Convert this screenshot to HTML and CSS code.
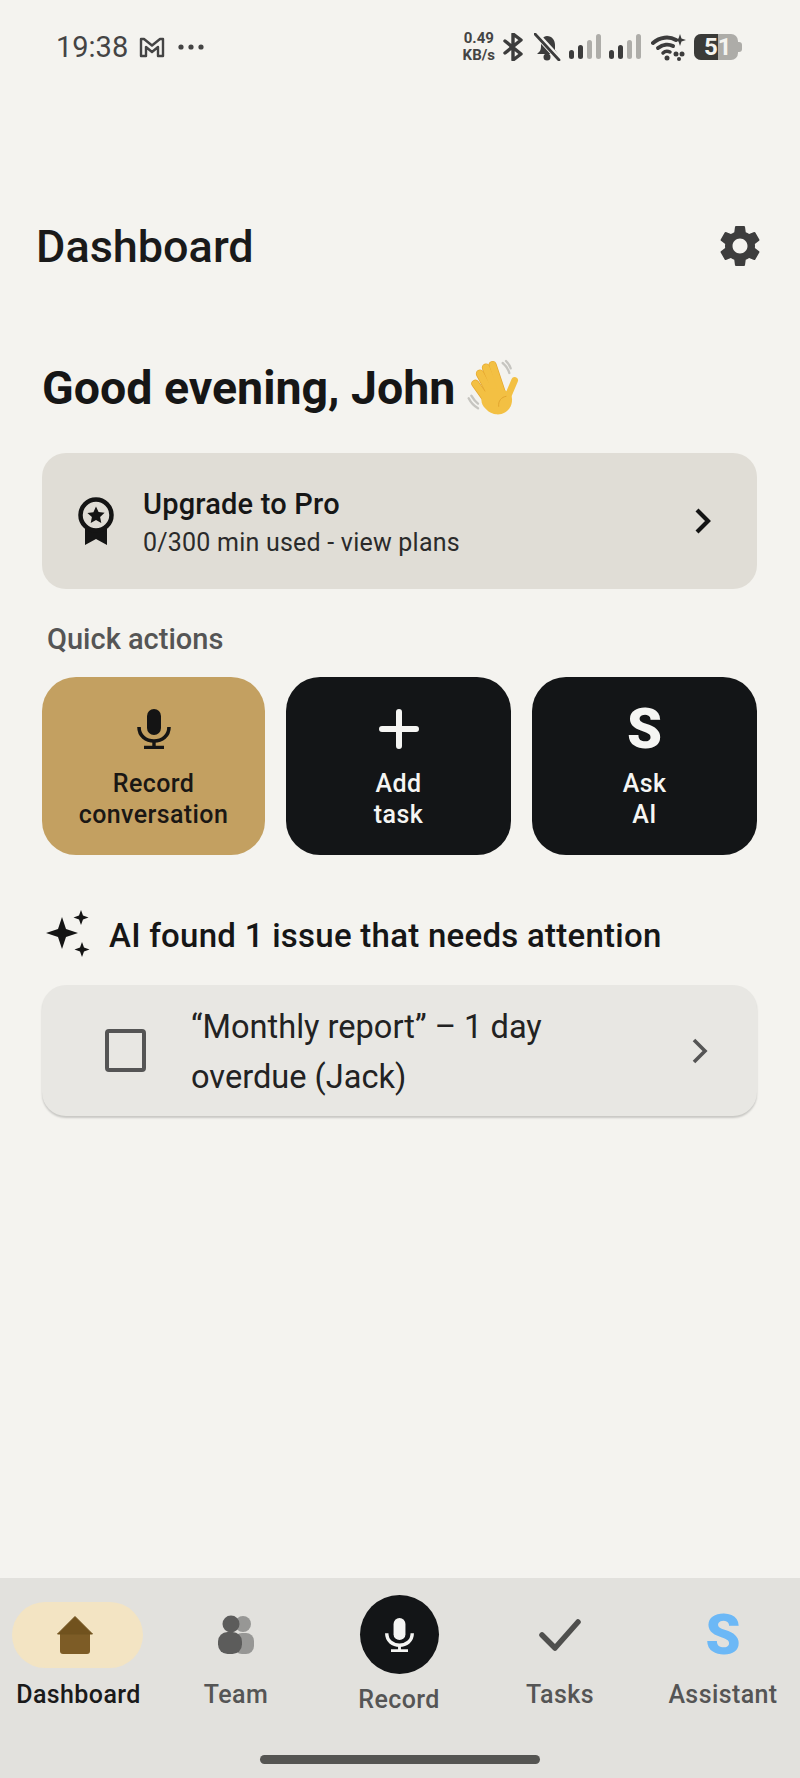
FILE: index.html
```html
<!DOCTYPE html>
<html lang="en">
<head>
    <meta charset="UTF-8">
    <meta name="viewport" content="width=device-width, initial-scale=1.0">
    <title>Dashboard</title>
    <link rel="stylesheet" href="styles.css">
</head>
<body>
    <div class="status-bar">
        <span class="time">19:38</span>
        <svg class="mail-icon" width="26" height="21" viewBox="0 0 26 21"><path d="M2 2h3l8 6.500L21 2h3v17h-5v-9l-6 5-6-5v9H2z" fill="none" stroke="#444" stroke-width="2.400" stroke-linejoin="round"/></svg>
        <svg class="more-icon" width="26" height="6" viewBox="0 0 26 6"><circle cx="3" cy="3" r="2.600" fill="#444"/><circle cx="13" cy="3" r="2.600" fill="#444"/><circle cx="23" cy="3" r="2.600" fill="#444"/></svg>
        <div class="status-right">
            <div class="speed"><span>0.49</span><span>KB/s</span></div>
            <svg width="21" height="28" viewBox="0 0 21 28"><path d="M2 8l16 13-8 6V1l8 6L2 20" fill="none" stroke="#3c3c3c" stroke-width="3.400" stroke-linejoin="round" stroke-linecap="round"/></svg>
            <svg class="bell" width="27" height="28" viewBox="0 0 27 28"><path d="M13 3c5 0 8 4 8 9v5l3 4H3l3-3c1-2 1-4 1-6 0-5 2-9 6-9z" fill="#3c3c3c"/><circle cx="13" cy="24" r="3.500" fill="#3c3c3c"/><path d="M2 1l23 25" stroke="#f4f3ef" stroke-width="6"/><path d="M1 1l24 26" stroke="#3c3c3c" stroke-width="2.800" stroke-linecap="round"/></svg>
            <svg class="signal" width="32" height="26" viewBox="0 0 32 26"><rect x="0" y="16" width="5" height="9" rx="2.500" fill="#3c3c3c"/><rect x="9" y="11" width="5" height="14" rx="2.500" fill="#3c3c3c"/><rect x="18" y="6" width="5" height="19" rx="2.500" fill="#aeada9"/><rect x="27" y="0" width="5" height="25" rx="2.500" fill="#aeada9"/></svg>
            <svg class="signal" width="32" height="26" viewBox="0 0 32 26"><rect x="0" y="16" width="5" height="9" rx="2.500" fill="#3c3c3c"/><rect x="9" y="11" width="5" height="14" rx="2.500" fill="#3c3c3c"/><rect x="18" y="6" width="5" height="19" rx="2.500" fill="#aeada9"/><rect x="27" y="0" width="5" height="25" rx="2.500" fill="#aeada9"/></svg>
            <svg class="wifi" width="35" height="27" viewBox="0 0 35 27">
                <path d="M2 9c7-6 16-7 23-3" fill="none" stroke="#3c3c3c" stroke-width="4" stroke-linecap="round"/>
                <path d="M7 14c5-4 11-4 15-2" fill="none" stroke="#3c3c3c" stroke-width="4" stroke-linecap="round"/>
                <path d="M12 19c2-2 5-2 7-1" fill="none" stroke="#3c3c3c" stroke-width="3.500" stroke-linecap="round"/>
                <circle cx="16" cy="24" r="2.500" fill="#3c3c3c"/>
                <path d="M29 0l1.500 4.500L35 6l-4.500 1.500L29 12l-1.500-4.500L23 6l4.500-1.500z" fill="#3c3c3c"/>
                <circle cx="25" cy="20" r="2.500" fill="#3c3c3c"/><circle cx="31" cy="20" r="2.500" fill="#3c3c3c"/><circle cx="28" cy="25" r="2" fill="#3c3c3c"/>
            </svg>
            <div class="battery"><div class="battery-fill"></div><span>51</span></div>
        </div>
    </div>

    <main class="content">
        <header class="page-header">
            <h1>Dashboard</h1>
            <svg class="gear" width="50" height="50" viewBox="0 0 24 24"><path fill="#3d3d3d" d="M19.140 12.940c.04-.3.06-.61.06-.94 0-.32-.02-.64-.07-.94l2.030-1.580c.18-.14.23-.41.12-.61l-1.920-3.320c-.12-.22-.37-.29-.59-.22l-2.390.96c-.5-.38-1.030-.7-1.620-.94l-.36-2.540c-.04-.24-.24-.41-.48-.41h-3.840c-.24 0-.43.17-.47.41l-.36 2.540c-.59.24-1.130.57-1.620.94l-2.390-.96c-.22-.08-.47 0-.59.22L2.740 8.870c-.12.21-.08.47.12.61l2.030 1.580c-.05.3-.09.63-.09.94s.02.64.07.94l-2.030 1.580c-.18.14-.23.41-.12.61l1.920 3.320c.12.22.37.29.59.22l2.390-.96c.5.38 1.030.7 1.620.94l.36 2.540c.05.24.24.41.48.41h3.840c.24 0 .44-.17.47-.41l.36-2.540c.59-.24 1.130-.56 1.620-.94l2.390.96c.22.08.47 0 .59-.22l1.920-3.320c.12-.22.07-.47-.12-.61l-2.010-1.580zM12 15.600c-1.980 0-3.600-1.620-3.600-3.600s1.620-3.600 3.600-3.600 3.600 1.620 3.600 3.600-1.620 3.600-3.600 3.600z"/></svg>
        </header>

        <div class="greeting">
            <h2>Good evening, John</h2>
            <svg class="wave" width="80" height="70" viewBox="0 0 240 210">
                <path d="M140 36c10 8 16 16 20 30M150 30c6 6 12 14 14 22M38 142c6 12 14 22 28 30M46 134c6 10 12 18 20 24" fill="none" stroke="#c6c5c0" stroke-width="7" stroke-linecap="round"/>
                <g fill="none" stroke-linecap="round">
                    <path d="M58 98l44 62" stroke="#e3a52e" stroke-width="24"/>
                    <path d="M72 68l44 82" stroke="#e3a52e" stroke-width="25"/>
                    <path d="M90 50l36 86" stroke="#e3a52e" stroke-width="25"/>
                    <path d="M110 42l28 84" stroke="#e3a52e" stroke-width="24"/>
                    <path d="M58 98l44 62" stroke="#f3c043" stroke-width="20"/>
                    <path d="M72 68l44 82" stroke="#f3c043" stroke-width="21"/>
                    <path d="M90 50l36 86" stroke="#f3c043" stroke-width="21"/>
                    <path d="M110 42l28 84" stroke="#f3c043" stroke-width="20"/>
                    <path d="M176 88l-22 52" stroke="#f3c043" stroke-width="20"/>
                </g>
                <path d="M82 128c12-18 46-24 78-2 10 8 10 26 4 40-8 16-24 26-44 24-16-2-30-12-40-28-6-10-4-24 2-34z" fill="#f3c043"/>
                <path d="M150 136c-14 2-24 14-22 30" fill="none" stroke="#e3a52e" stroke-width="3" stroke-linecap="round"/>
            </svg>
        </div>

        <div class="upgrade-card">
            <svg class="badge" width="36" height="48" viewBox="0 0 36 48">
                <path d="M7 30v18l11-6 11 6V30z" fill="#141414"/>
                <circle cx="18" cy="18" r="15.500" fill="#e0ddd6" stroke="#141414" stroke-width="4.500"/>
                <path d="M18 9.500l2.600 5.600 6 .7-4.500 4.100 1.200 6L18 22.900 12.700 26l1.200-6-4.500-4.100 6-.7z" fill="#141414"/>
            </svg>
            <div class="upgrade-text">
                <div class="upgrade-title">Upgrade to Pro</div>
                <div class="upgrade-sub">0/300 min used - view plans</div>
            </div>
            <svg width="18" height="26" viewBox="0 0 18 26"><path d="M3 2l11 11L3 24" fill="none" stroke="#141414" stroke-width="4.200"/></svg>
        </div>

        <div class="section-label">Quick actions</div>
        <div class="actions">
            <div class="action action-gold">
                <div class="action-icon">
                    <svg width="34" height="40" viewBox="0 0 34 40"><rect x="10" y="0" width="14" height="26" rx="7" fill="#141414"/><path d="M2 18c0 9 7 14 15 14s15-5 15-14" fill="none" stroke="#141414" stroke-width="3.600"/><path d="M17 32v6M7 38.500h20" stroke="#141414" stroke-width="3.400"/></svg>
                </div>
                <div class="action-label">Record<br>conversation</div>
            </div>
            <div class="action">
                <div class="action-icon">
                    <svg width="40" height="40" viewBox="0 0 40 40"><path d="M20 3v34M3 20h34" stroke="#f5f5f3" stroke-width="6" stroke-linecap="round"/></svg>
                </div>
                <div class="action-label">Add<br>task</div>
            </div>
            <div class="action">
                <div class="action-icon"><span class="s-logo">S</span></div>
                <div class="action-label">Ask<br>AI</div>
            </div>
        </div>

        <div class="issue-heading">
            <svg width="46" height="48" viewBox="0 0 46 48">
                <path d="M17 7l4 12 12 4-12 4-4 12-4-12-12-4 12-4z" fill="#141414"/>
                <path d="M36 0l2 5.500L43.500 7.500 38 9.500 36 15l-2-5.500-5.500-2 5.500-2z" fill="#141414"/>
                <path d="M37 32l2 5.500 5.500 2-5.500 2L37 47l-2-5.500-5.500-2 5.500-2z" fill="#141414"/>
            </svg>
            <span class="issue-title">AI found 1 issue that needs attention</span>
        </div>

        <div class="issue-card">
            <div class="checkbox"></div>
            <div class="issue-text">“Monthly report” – 1 day overdue (Jack)</div>
            <svg width="18" height="26" viewBox="0 0 18 26"><path d="M3 2l11 11L3 24" fill="none" stroke="#555" stroke-width="3.600"/></svg>
        </div>
    </main>

    <nav class="bottom-nav">
        <div class="nav-items">
            <div class="nav-item">
                <div class="nav-icon nav-icon-active">
                    <svg class="home-icon" width="38" height="40" viewBox="0 0 38 40"><path d="M4 17h30v19c0 2-1 3-3 3H7c-2 0-3-1-3-3z" fill="#7d5c26"/><path d="M19 1.500L36.500 19h-35z" fill="#71521e" stroke="#71521e" stroke-linejoin="round"/></svg>
                </div>
                <span class="nav-label nav-label-active">Dashboard</span>
            </div>
            <div class="nav-item">
                <div class="nav-icon">
                    <svg width="36" height="40" viewBox="0 0 36 40"><circle cx="25" cy="9" r="8" fill="#979795"/><rect x="16" y="18" width="20" height="21" rx="8" fill="#979795"/><circle cx="13" cy="9" r="8.500" fill="#5c5c5b"/><rect x="0" y="17" width="24" height="22" rx="9.500" fill="#5c5c5b"/></svg>
                </div>
                <span class="nav-label">Team</span>
            </div>
            <div class="nav-item nav-item-record">
                <div class="record-btn">
                    <svg width="29" height="34" viewBox="0 0 34 40"><rect x="10" y="0" width="14" height="26" rx="7" fill="#f5f5f3"/><path d="M2 18c0 9 7 14 15 14s15-5 15-14" fill="none" stroke="#f5f5f3" stroke-width="4"/><path d="M17 32v6M7 38.500h20" stroke="#f5f5f3" stroke-width="3.400"/></svg>
                </div>
                <span class="nav-label">Record</span>
            </div>
            <div class="nav-item">
                <div class="nav-icon">
                    <svg width="42" height="34" viewBox="0 0 42 34"><path d="M3 17l13 13L39 4" fill="none" stroke="#4f4f4d" stroke-width="5.500" stroke-linecap="round" stroke-linejoin="round"/></svg>
                </div>
                <span class="nav-label">Tasks</span>
            </div>
            <div class="nav-item nav-item-last">
                <div class="nav-icon"><span class="s-logo s-logo-blue">S</span></div>
                <span class="nav-label">Assistant</span>
            </div>
        </div>
        <div class="home-bar"></div>
    </nav>
</body>
</html>
```

FILE: styles.css
```css
* {
    box-sizing: border-box;
}
body {
    margin: 0;
    height: 1778px;
    display: flex;
    flex-direction: column;
    overflow: hidden;
    font-family: Roboto, "Liberation Sans", sans-serif;
    background-color: #f4f3ef;
    color: #161616;
}
h1, h2 {
    margin: 0;
}

/* status bar */
.status-bar {
    display: flex;
    align-items: center;
    height: 94px;
    padding: 0 58px 0 56px;
    color: #444;
}
.time {
    font-size: 29px;
    line-height: 32px;
    margin-right: 11px;
}
.mail-icon {
    margin-right: 13px;
}
.status-right {
    display: flex;
    align-items: center;
    margin-left: auto;
}
.speed {
    display: flex;
    flex-direction: column;
    align-items: center;
    font-size: 15px;
    line-height: 17px;
    font-weight: 700;
    color: #444;
    margin-right: 8px;
}
.bell {
    margin-left: 10px;
}
.signal {
    margin-left: 8px;
}
.wifi {
    margin-left: 10px;
}
.battery {
    position: relative;
    width: 44px;
    height: 26px;
    margin: 0 4px 0 8px;
    border-radius: 7px;
    background: #adaca8;
}
.battery::after {
    content: "";
    position: absolute;
    right: -4px;
    top: 8px;
    width: 4px;
    height: 10px;
    border-radius: 0 3px 3px 0;
    background: #adaca8;
}
.battery-fill {
    width: 24px;
    height: 26px;
    border-radius: 7px 0 0 7px;
    background: #3a3a38;
}
.battery span {
    position: absolute;
    left: 10px;
    top: 0;
    font-size: 24px;
    line-height: 26px;
    font-weight: 700;
    color: #f4f3ef;
}

/* main content */
.content {
    flex: 1;
    padding: 0 43px 0 42px;
}
.page-header {
    display: flex;
    align-items: center;
    justify-content: space-between;
    height: 60px;
    margin: 122px -8px 0 -6px;
}
.page-header h1 {
    padding-top: 2px;
    font-size: 45px;
    line-height: 60px;
    font-weight: 500;
    color: #1a1a1a;
}
.greeting {
    display: flex;
    align-items: center;
    gap: 1px;
    margin-top: 82px;
    height: 60px;
}
.greeting h2 {
    font-size: 46.500px;
    line-height: 60px;
    font-weight: 700;
}
.wave {
    flex: none;
    margin-bottom: 4px;
}
.upgrade-card {
    display: flex;
    align-items: center;
    height: 136px;
    margin-top: 35px;
    padding: 0 45px 0 36px;
    border-radius: 24px;
    background: #e0ddd6;
}
.upgrade-text {
    flex: 1;
    margin-left: 29px;
    padding-top: 3px;
}
.upgrade-title {
    font-size: 29px;
    line-height: 36px;
    font-weight: 500;
    letter-spacing: 0.2px;
}
.upgrade-sub {
    font-size: 25px;
    line-height: 34px;
    margin-top: 4px;
    letter-spacing: 0.22px;
    color: #2b2b2b;
}
.section-label {
    margin: 32px 0 0 5px;
    font-size: 29px;
    line-height: 36px;
    font-weight: 500;
    color: #555;
}
.actions {
    display: grid;
    grid-template-columns: 223px 225px 225px;
    gap: 21px;
    margin-top: 20px;
}
.action {
    height: 178px;
    padding-top: 32px;
    border-radius: 34px;
    background: #131517;
    color: #f5f5f3;
    text-align: center;
}
.action-gold {
    background: #c3a061;
    color: #1a1714;
}
.action-icon {
    display: flex;
    align-items: center;
    justify-content: center;
    height: 40px;
}
.action-label {
    margin-top: 19px;
    font-size: 25px;
    line-height: 31px;
    font-weight: 500;
    letter-spacing: 0.4px;
}
.s-logo {
    font-size: 56px;
    line-height: 40px;
    font-weight: 900;
}
.s-logo-blue {
    color: #6cb8f6;
}
.issue-heading {
    display: flex;
    align-items: center;
    gap: 18px;
    margin: 55px 0 0 3px;
    height: 48px;
    font-size: 33px;
    font-weight: 500;
    letter-spacing: 0.26px;
}
.issue-title {
    padding-top: 2px;
}
.issue-card {
    display: flex;
    align-items: center;
    height: 131px;
    margin-top: 27px;
    padding: 0 48px 0 63px;
    border-radius: 24px;
    background: #e8e7e3;
    box-shadow: 0 2px 2px rgba(0, 0, 0, 0.18);
}
.checkbox {
    flex: none;
    width: 41px;
    height: 43px;
    border: 4px solid #555;
    border-radius: 4px;
}
.issue-text {
    width: 380px;
    margin: 0 auto 0 45px;
    padding-top: 2px;
    font-size: 32.600px;
    line-height: 50px;
    color: #222;
}

/* bottom nav */
.bottom-nav {
    height: 200px;
    padding-top: 37px;
    background: #e2e1dd;
}
.nav-items {
    display: grid;
    grid-template-columns: 157px 158px 168px 154px 163px;
}
.nav-item {
    display: flex;
    flex-direction: column;
    align-items: center;
    position: relative;
}
.nav-item-last {
    padding-left: 9px;
}
.nav-icon {
    display: flex;
    align-items: center;
    justify-content: center;
    height: 40px;
}
.nav-icon-active::before {
    content: "";
    position: absolute;
    left: 12px;
    top: -13px;
    width: 131px;
    height: 66px;
    border-radius: 33px;
    background: #f3e4c3;
}
.home-icon {
    position: relative;
    margin-right: 7px;
}
.nav-label {
    margin-top: 23px;
    font-size: 25px;
    line-height: 34px;
    font-weight: 500;
    letter-spacing: 0.4px;
    color: #555;
}
.nav-label-active {
    position: relative;
    color: #1a1a1a;
}
.nav-item-record {
    margin-top: -20px;
}
.record-btn {
    display: flex;
    align-items: center;
    justify-content: center;
    width: 79px;
    height: 79px;
    border-radius: 50%;
    background: #131517;
}
.nav-item-record .nav-label {
    margin-top: 9px;
}
.home-bar {
    width: 280px;
    height: 9px;
    margin: 38px auto 0;
    border-radius: 5px;
    background: #555552;
}
```
